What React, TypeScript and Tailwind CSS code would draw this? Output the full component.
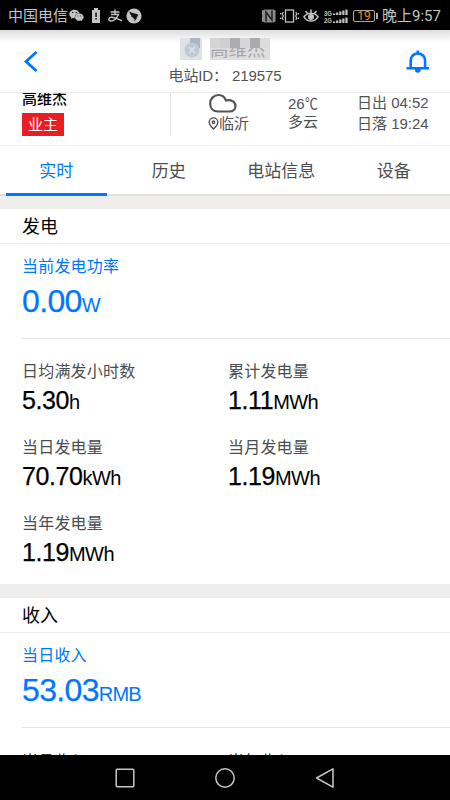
import clsx from "clsx";
import { FaWeixin } from "react-icons/fa";

type Metric = {
  label: string;
  value: string;
  unit: string;
};

const TABS = ["实时", "历史", "电站信息", "设备"];

const METRICS: Metric[] = [
  { label: "日均满发小时数", value: "5.30", unit: "h" },
  { label: "累计发电量", value: "1.11", unit: "MWh" },
  { label: "当日发电量", value: "70.70", unit: "kWh" },
  { label: "当月发电量", value: "1.19", unit: "MWh" },
  { label: "当年发电量", value: "1.19", unit: "MWh" }
];

function SignalBars() {
  return (
    <svg width="25" height="16" viewBox="0 0 25 16" fill="#c4c4c4" className="ml-[5px]">
      <text x="0" y="7.5" fontSize="8" fontWeight="bold" textLength="8" lengthAdjust="spacingAndGlyphs">3G</text>
      <text x="0" y="15" fontSize="8" fontWeight="bold" textLength="8" lengthAdjust="spacingAndGlyphs">2G</text>
      {[0, 1, 2, 3, 4].map((i) => (
        <g key={i}>
          <rect x={9 + i * 3.1} y={5.5 - i} width="2.2" height={1.5 + i} />
          <rect x={9 + i * 3.1} y={13.5 - i} width="2.2" height={1.5 + i} />
        </g>
      ))}
    </svg>
  );
}

function StatusBar() {
  return (
    <div className="flex h-[30px] shrink-0 items-center bg-black pt-px pl-2 text-[#c4c4c4]">
      <span className="w-[61px] text-[15px] leading-[30px] whitespace-nowrap">中国电信</span>
      <FaWeixin className="h-[15px] w-[15px]" />
      <svg width="8" height="15" viewBox="0 0 8 15" className="ml-[8px]">
        <path d="M2 0h4v2h2v13H0V2h2z" fill="#c4c4c4" />
        <path d="M3.3 4.5h1.5V9H3.3zM3.3 10h1.5v1.5H3.3z" fill="#111" />
      </svg>
      <svg width="15" height="14" viewBox="0 0 15 14" fill="none" stroke="#c4c4c4" strokeWidth="1.4" className="ml-[8px]">
        <path d="M2.5 3h9M7 .5v5M3 5.5h7.5C9.2 8.3 6.5 12 3 12c-3.4 0-2.7-4 1-3.7 3.3.3 6 2.4 10 3.4" />
      </svg>
      <svg width="16" height="16" viewBox="0 0 16 16" className="ml-[3px]">
        <circle cx="8" cy="8" r="7.6" fill="#c4c4c4" />
        <path d="M3.3 3.5c2.5 1.5 6 2 8.8 3-.1 1.6-1 2.4-1.7 3.2l.7.3-3 3.4.6-2.4H7.4l.3-1C5.5 9.2 5 8 5 7.5l1 .2C4.5 6.8 3.5 5.2 3.3 3.5z" fill="#111" />
      </svg>
      <div className="ml-auto flex items-center pr-[9px]">
        <svg width="14" height="14" viewBox="0 0 14 14" fill="none">
          <path d="M0 1.5 2.5.5h9l2 1v11l-2 1h-9L0 12.5z" fill="#8a8a8a" />
          <path d="M4 12.5V3L10 11V1.5" stroke="#222" strokeWidth="1.5" />
        </svg>
        <svg width="19" height="14" viewBox="0 0 19 14" fill="none" stroke="#c4c4c4" strokeWidth="1.3" className="ml-[4px]">
          <rect x="5.5" y="1" width="8" height="12" />
          <path d="M3.3 3 2.3 5l1 2-1 2 1 2M15.7 3l1 2-1 2 1 2-1 2M.7 4v1.5M.7 8.5V10M18.4 4v1.5M18.4 8.5V10" strokeWidth="1.2" />
        </svg>
        <svg width="16" height="15" viewBox="0 0 16 15" fill="none" stroke="#c4c4c4" strokeWidth="1.5" className="ml-[4px]">
          <path d="M1 8.8C4.5 4 11.5 4 15 8.8 11.5 14.5 4.5 14.5 1 8.8zM8 1.5V5M2.5 3l2 2.5M13.5 3l-2 2.5" />
          <circle cx="8" cy="9" r="2.3" fill="#c4c4c4" />
        </svg>
        <SignalBars />
        <div className="ml-[4px] h-[12px] w-[22px] rounded-[2px] border border-[#aaa] text-center font-['Roboto',sans-serif] text-[12px] leading-[10px] text-[#ff8a00]">
          19
        </div>
        <div className="ml-px h-[6px] w-[2px] bg-[#aaa]" />
        <span className="ml-[4px] w-[59px] font-['Roboto','Noto_Sans_CJK_SC',sans-serif] text-[15px] leading-[30px] whitespace-nowrap">
          晚上9:57
        </span>
      </div>
    </div>
  );
}

function Header() {
  return (
    <header className="flex h-[63px] shrink-0 justify-between border-b border-[#ececec] bg-linear-to-b from-[#dedede] to-white to-20%">
      <svg width="60" height="62" viewBox="0 0 60 62" fill="none" stroke="#0076ff" strokeWidth="2.8">
        <path d="M36.5 22 26 31.5 36.5 41" />
      </svg>
      <div className="flex w-[140px] flex-col items-center pt-2">
        <div className="flex h-[22px] w-[90px] items-stretch gap-2">
          <div className="relative w-[22px] bg-[#dfe3e7]">
            <div className="absolute right-[2px] h-[10px] w-[10px] bg-[#aab5c4]" />
            <svg width="22" height="22" viewBox="0 0 22 22" className="relative">
              <circle cx="12" cy="12" r="7.5" fill="#c0cad6" />
              <path d="M9 9l6 6M15 9l-6 6" stroke="#dfe5ec" strokeWidth="1.5" />
            </svg>
          </div>
          <div className="relative w-[60px] bg-[#dedede]">
            <span className="absolute top-px left-0 text-[18.5px] leading-[22px] whitespace-nowrap text-[#a6a6a8]">
              高维杰
            </span>
            <div className="relative grid h-[10px] grid-cols-6">
              <div className="bg-[#d4d4d6]" />
              <div className="bg-[#cfcfd2]" />
              <div className="bg-[#adadb1]" />
              <div className="bg-[#d6d6d8]" />
              <div className="bg-[#aaaaae]" />
              <div className="bg-[#dcdcdc]" />
            </div>
          </div>
        </div>
        <p className="mt-[6px] text-[15px] leading-[20px] tracking-[-0.1px] whitespace-pre text-[#4f5256]">
          电站ID： 219575
        </p>
      </div>
      <svg width="60" height="62" viewBox="0 0 60 62" fill="none" stroke="#0076ff" strokeWidth="2.6">
        <path d="M16.5 38.3h22.5M20.7 38v-7.5c0-4 3-7 7.2-7s7.2 3 7.2 7V38M27.8 20.5v3" />
        <path d="M24.8 39h6a3 3.8 0 0 1-6 0z" fill="#0076ff" stroke="none" />
      </svg>
    </header>
  );
}

function OwnerInfo() {
  return (
    <div className="flex h-[53px] shrink-0 overflow-hidden border-b border-[#ececec] text-[15px] leading-[19px] text-[#4f5256]">
      <div className="w-[170px] pl-[22px]">
        <p className="-mt-[5px] h-[20px] leading-[22px] font-medium text-black">高维杰</p>
        <div className="mt-[5px] h-[23px] w-[42px] bg-[#ea1c24] text-center leading-[24px] text-white">业主</div>
      </div>
      <div className="h-[43px] w-px bg-[#e2e2e2]" />
      <div className="w-[117px] pl-[37px]">
        <svg width="30" height="20" viewBox="0 0 30 20" fill="none" stroke="#555" strokeWidth="2.2" className="block">
          <path d="M10 18.5C5 18.5 2.2 15 2.2 10.5 2.2 5.500 6 2 10.500 2c3.800 0 6.200 2 7.500 5.500 5-1.500 9.500 1.200 9.500 5.500 0 3.200-2.600 5.500-5.800 5.500z" />
        </svg>
        <div className="mt-px flex items-center">
          <svg width="11" height="14" viewBox="0 0 11 14" fill="none" stroke="#4f5256" strokeWidth="1.4">
            <path d="M5.5 12C3 9.5 1.2 7.3 1.2 5.2a4.3 4.3 0 0 1 8.6 0c0 2.1-1.8 4.3-4.3 6.8z" />
            <circle cx="5.5" cy="5.2" r="1.2" />
          </svg>
          <span>临沂</span>
        </div>
      </div>
      <div className="w-[69px] pt-px">
        <p>
          26<span className="inline-block origin-left scale-x-85">℃</span>
        </p>
        <p className="leading-[18px]">多云</p>
      </div>
      <div className="whitespace-nowrap">
        <p className="leading-5">日出 04:52</p>
        <p className="leading-[21px]">日落 19:24</p>
      </div>
    </div>
  );
}

function Tabs() {
  return (
    <nav className="grid h-[50px] shrink-0 grid-cols-4 border-b-2 border-[#dfdfdf] text-[17px] text-[#4a4d51]">
      {TABS.map((tab, index) => (
        <button
          key={tab}
          type="button"
          className={clsx(
            "mx-[6px] -mb-[2px] h-[50px] border-b-[3px] pt-[5px] leading-[42px] whitespace-nowrap",
            index === 0 ? "border-[#0076ff] text-[#0076ff]" : "border-transparent"
          )}
        >
          {tab}
        </button>
      ))}
    </nav>
  );
}

function SectionTitle({ title }: { title: string }) {
  return (
    <h2 className="h-[35px] shrink-0 border-b border-[#ececec] pl-[22px] text-[18px] leading-[36px] text-black">
      {title}
    </h2>
  );
}

function Highlight({ label, value, unit }: Metric) {
  return (
    <div className="ml-[22px] h-[95px] shrink-0 border-b border-[#e8e8e8] pt-3 text-[#0076ff]">
      <p className="text-[16px] leading-[22px] tracking-[0.2px]">{label}</p>
      <p className="mt-[4px] text-[32px] leading-[38px] tracking-[-0.65px] [-webkit-text-stroke:0.25px]">
        {value}
        <span className="text-[20px] tracking-[-0.8px] [-webkit-text-stroke:0]">{unit}</span>
      </p>
    </div>
  );
}

export default function App() {
  return (
    <div className="flex h-[800px] w-[450px] flex-col overflow-hidden bg-white font-['Liberation_Sans','Noto_Sans_CJK_SC',sans-serif]">
      <StatusBar />
      <Header />
      <OwnerInfo />
      <Tabs />
      <div className="h-[13px] shrink-0 bg-[#efeeed]" />

      <SectionTitle title="发电" />
      <Highlight label="当前发电功率" value="0.00" unit="W" />
      <div className="grid h-[245px] shrink-0 auto-rows-[76px] grid-cols-[206px_1fr] content-start pt-[22px] pl-[22px]">
        {METRICS.map(({ label, value, unit }) => (
          <div key={label}>
            <p className="text-[16px] leading-[22px] tracking-[0.2px] text-[#4a4d51]">{label}</p>
            <p className="mt-[2px] text-[25px] leading-[30px] tracking-[-0.4px] text-black [-webkit-text-stroke:0.25px]">
              {value}
              <span className="text-[20px] tracking-[-0.6px] [-webkit-text-stroke:0]">{unit}</span>
            </p>
          </div>
        ))}
      </div>

      <div className="h-[14px] shrink-0 bg-[#efeeed]" />
      <SectionTitle title="收入" />
      <Highlight label="当日收入" value="53.03" unit="RMB" />
      <div className="grid min-h-0 flex-1 grid-cols-[206px_1fr] overflow-hidden pt-[23px] pl-[22px] text-[16px] leading-[22px] text-[#333]">
        <p>当月收入</p>
        <p>当年收入</p>
      </div>

      <div className="flex h-[45px] shrink-0 justify-center gap-[80px] bg-black pt-[13px]">
        <svg width="20" height="20" viewBox="0 0 20 20" fill="none" stroke="#c8c8c8" strokeWidth="1.5">
          <rect x="1.2" y="1.2" width="17.6" height="17.6" rx="1" />
        </svg>
        <svg width="20" height="20" viewBox="0 0 20 20" fill="none" stroke="#c8c8c8" strokeWidth="1.5">
          <circle cx="10" cy="10" r="9.2" />
        </svg>
        <svg width="20" height="20" viewBox="0 0 20 20" fill="none" stroke="#c8c8c8" strokeWidth="1.5" strokeLinejoin="round">
          <path d="M18 .8v18.4L1.5 10z" />
        </svg>
      </div>
    </div>
  );
}
